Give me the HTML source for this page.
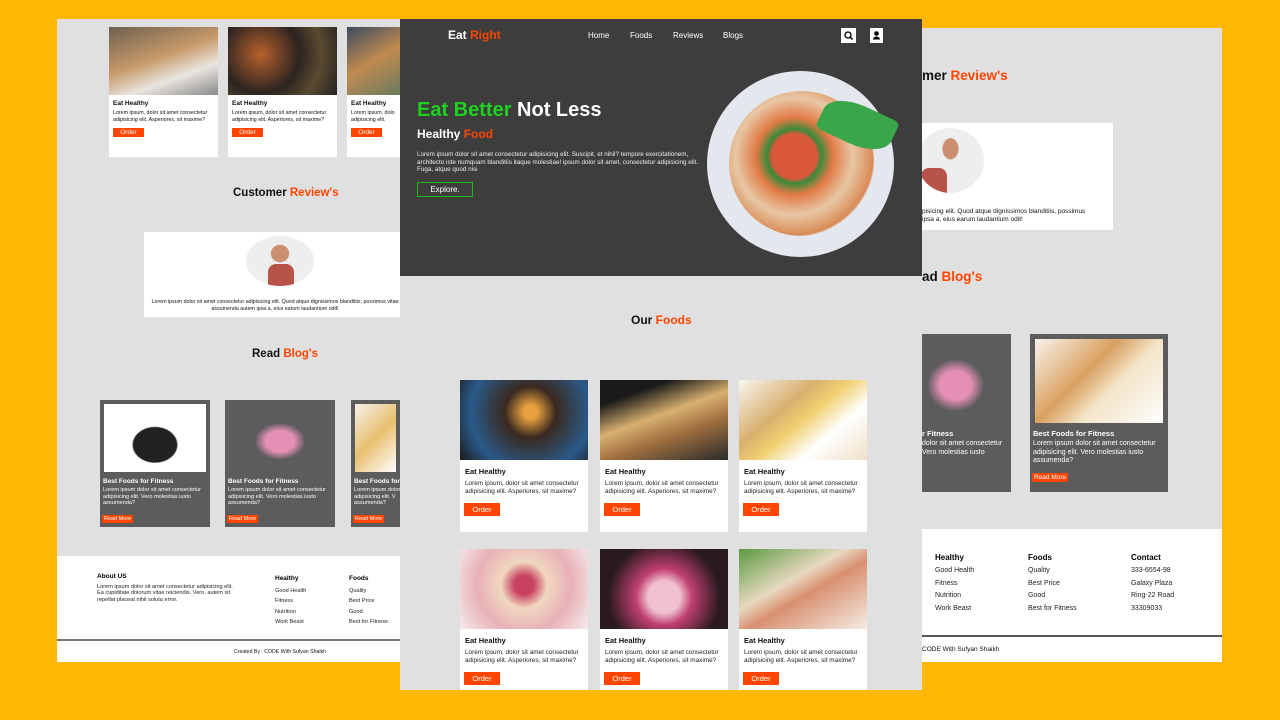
<!DOCTYPE html>
<html><head><meta charset="utf-8"><style>
*{margin:0;padding:0;box-sizing:border-box}
body{width:1280px;height:720px;background:#ffb703;position:relative;overflow:hidden;font-family:"Liberation Sans",Arial,sans-serif;color:#111}
.a{position:absolute}
.o{color:#ff4500}
.card{position:absolute;background:#fff}
.card .img{height:68px}
.card h5{font-size:6.5px;margin:5px 4px 3px}
.card p{font-size:5.3px;margin:0 4px;line-height:6.5px}
.card b.btn{display:block;background:#ff4500;color:#fff;font-size:6.5px;font-weight:normal;width:31px;text-align:center;margin:5px 4px;padding:1px 0}
.fc{position:absolute;background:#fff;width:128px;height:152px}
.fc .img{height:80px}
.fc h5{font-size:7.5px;margin:7px 5px 4px}
.fc p{font-size:6.4px;line-height:8px;margin:0 5px;color:#222}
.fc .btn{display:block;background:#ff4500;color:#fff;font-size:7.5px;width:36px;text-align:center;margin:7px 4px;padding:2px 0}
.bc{position:absolute;background:#5c5c5c;color:#fff}
.bc h5{font-size:6.5px;margin:6px 3px 2px}
.bc p{font-size:5.6px;line-height:6.5px;margin:0 3px}
.bc .btn{display:inline-block;background:#ff4500;font-size:5.5px;padding:1px 2px;margin:3px 2px}
.h2{position:absolute;font-weight:bold;white-space:nowrap}
.ft{position:absolute;font-size:5.6px;line-height:10.5px;color:#222}
.ft b{font-size:7px;display:block;margin-bottom:1px;color:#000}
</style></head><body>

<!-- LEFT PANEL -->
<div class="a" style="left:57px;top:19px;width:343px;height:643px;background:#e0e0e0"></div>
<div class="card" style="left:109px;top:27px;width:109px;height:130px"><div class="img" style="background:linear-gradient(160deg,#6d6050,#c79a6a 45%,#e9e5df 70%,#8a8a8a)"></div><h5>Eat Healthy</h5><p>Lorem ipsum, dolor sit amet consectetur adipisicing elit. Asperiores, sit maxime?</p><b class="btn">Order</b></div>
<div class="card" style="left:228px;top:27px;width:109px;height:130px"><div class="img" style="background:radial-gradient(circle at 30% 40%,#b8612e,#2c2420 45%,#5a4a30 70%,#222)"></div><h5>Eat Healthy</h5><p>Lorem ipsum, dolor sit amet consectetur adipisicing elit. Asperiores, sit maxime?</p><b class="btn">Order</b></div>
<div class="card" style="left:347px;top:27px;width:53px;height:130px;overflow:hidden"><div class="img" style="background:linear-gradient(150deg,#3a4a60,#c08a50 50%,#6a7a60)"></div><h5>Eat Healthy</h5><p style="white-space:nowrap">Lorem ipsum, dolo<br>adipisicing elit.</p><b class="btn">Order</b></div>
<div class="h2" style="left:233px;top:187px;font-size:11.5px">Customer <span class="o">Review's</span></div>
<div class="a" style="left:144px;top:232px;width:256px;height:85px;background:#fff"></div>
<div class="a" style="left:246px;top:236px;width:68px;height:50px;border-radius:50%;background:radial-gradient(ellipse at 50% 35%,#c98f6e 0 18%,#eee 20%);overflow:hidden"><div class="a" style="left:22px;top:28px;width:26px;height:24px;background:#b8534a;border-radius:8px 8px 0 0"></div></div>
<div class="a" style="left:150px;top:299px;width:250px;font-size:5.3px;line-height:6.5px;text-align:center">Lorem ipsum dolor sit amet consectetur adipisicing elit. Quod atque dignissimos blanditiis, possimus vitae assumenda autem ipsa a, elus earum laudantium odit!</div>
<div class="h2" style="left:252px;top:348px;font-size:11.5px">Read <span class="o">Blog's</span></div>
<div class="bc" style="left:100px;top:400px;width:110px;height:127px"><div style="margin:4px;height:68px;background:radial-gradient(ellipse at 50% 60%,#222 0 30%,#fff 32%)"></div><h5>Best Foods for Fitness</h5><p>Lorem ipsum dolor sit amet consectetur adipisicing elit. Vero molestias iusto assumenda?</p><span class="btn">Read More</span></div>
<div class="bc" style="left:225px;top:400px;width:110px;height:127px"><div style="margin:4px;height:68px;background:radial-gradient(ellipse at 50% 55%,#e58fb5 0 20%,#5c5c5c 35%)"></div><h5>Best Foods for Fitness</h5><p>Lorem ipsum dolor sit amet consectetur adipisicing elit. Vero molestias iusto assumenda?</p><span class="btn">Read More</span></div>
<div class="bc" style="left:351px;top:400px;width:49px;height:127px;overflow:hidden"><div style="margin:4px;height:68px;background:linear-gradient(135deg,#f5f0ea,#e8c070 50%,#fff)"></div><h5 style="white-space:nowrap">Best Foods for F</h5><p style="white-space:nowrap">Lorem ipsum dolor<br>adipisicing elit. V<br>assumenda?</p><span class="btn">Read More</span></div>
<div class="a" style="left:57px;top:556px;width:343px;height:106px;background:#fff"></div>
<div class="a" style="left:57px;top:639px;width:343px;height:2px;background:#777"></div>
<div class="ft" style="left:97px;top:574px;width:140px;line-height:6.5px"><b style="margin-bottom:3px;font-size:6.5px">About US</b>Lorem ipsum dolor sit amet consectetur adipisicing elit. Ea cupiditate dolorum vitae reiciendis. Vero, autem sit repellat placeat nihil soluta error.</div>
<div class="ft" style="left:275px;top:574px"><b style="font-size:6.5px">Healthy</b>Good Health<br>Fitness<br>Nutrition<br>Work Beast</div>
<div class="ft" style="left:349px;top:574px"><b style="font-size:6.5px">Foods</b>Quality<br>Best Price<br>Good<br>Best for Fitness</div>
<div class="a" style="left:234px;top:649px;font-size:5.2px">Created By : CODE With Sufyan Shaikh</div>

<!-- RIGHT PANEL -->
<div class="a" style="left:922px;top:28px;width:300px;height:634px;background:#e0e0e0"></div>
<div class="h2" style="left:922px;top:68px;font-size:13.5px">mer <span class="o">Review's</span></div>
<div class="a" style="left:922px;top:123px;width:191px;height:107px;background:#fff"></div>
<div class="a" style="left:917px;top:128px;width:67px;height:65px;border-radius:50%;background:radial-gradient(ellipse at 50% 32%,#c98f6e 0 16%,#eee 18%);overflow:hidden"><div class="a" style="left:4px;top:40px;width:26px;height:26px;background:#b8534a;border-radius:8px 8px 0 0"></div></div>
<div class="a" style="left:922px;top:208px;width:190px;font-size:6.5px;line-height:8px">pisicing elit. Quod atque dignissimos blanditiis, possimus<br>ipsa a, eius earum laudantium odit!</div>
<div class="h2" style="left:922px;top:269px;font-size:13.5px">ad <span class="o">Blog's</span></div>
<div class="bc" style="left:922px;top:334px;width:89px;height:158px"><div style="margin:5px 5px 5px 0;height:84px;background:radial-gradient(ellipse at 40% 55%,#e58fb5 0 22%,#5c5c5c 40%)"></div><h5 style="font-size:7.5px;margin-left:0">r Fitness</h5><p style="font-size:7px;line-height:8.5px;margin-left:0">dolor sit amet consectetur Vero molestias iusto</p></div>
<div class="bc" style="left:1030px;top:334px;width:138px;height:158px"><div style="margin:5px;height:84px;background:linear-gradient(135deg,#f8f4ee,#d9a060 40%,#f2e4c8 60%,#fff)"></div><h5 style="font-size:7.5px">Best Foods for Fitness</h5><p style="font-size:7px;line-height:8.5px">Lorem ipsum dolor sit amet consectetur adipisicing elit. Vero molestias iusto assumenda?</p><span class="btn" style="font-size:6.5px">Read More</span></div>
<div class="a" style="left:922px;top:529px;width:300px;height:133px;background:#fff"></div>
<div class="a" style="left:922px;top:635px;width:300px;height:2px;background:#555"></div>
<div class="ft" style="left:935px;top:552px;font-size:7px;line-height:12.8px"><b style="font-size:8px;margin:0">Healthy</b>Good Health<br>Fitness<br>Nutrition<br>Work Beast</div>
<div class="ft" style="left:1028px;top:552px;font-size:7px;line-height:12.8px"><b style="font-size:8px;margin:0">Foods</b>Quality<br>Best Price<br>Good<br>Best for Fitness</div>
<div class="ft" style="left:1131px;top:552px;font-size:7px;line-height:12.8px"><b style="font-size:8px;margin:0">Contact</b>333-6554-98<br>Galaxy Plaza<br>Ring-22 Road<br>33309033</div>
<div class="a" style="left:922px;top:646px;font-size:6.5px">CODE With Sufyan Shaikh</div>

<!-- CENTER -->
<div class="a" style="left:400px;top:19px;width:522px;height:671px;background:#e0e0e0"></div>
<div class="a" style="left:400px;top:19px;width:522px;height:257px;background:#3d3d3d"></div>
<div class="a" style="left:448px;top:28px;font-size:12px;font-weight:bold;color:#fff">Eat <span class="o">Right</span></div>
<div class="a" style="left:588px;top:31px;font-size:8px;color:#fff">Home</div>
<div class="a" style="left:630px;top:31px;font-size:8px;color:#fff">Foods</div>
<div class="a" style="left:673px;top:31px;font-size:8px;color:#fff">Reviews</div>
<div class="a" style="left:723px;top:31px;font-size:8px;color:#fff">Blogs</div>
<div class="a" style="left:841px;top:28px;width:15px;height:15px;background:#fff"><svg width="15" height="15"><circle cx="7" cy="7" r="3" fill="none" stroke="#000" stroke-width="1.3"/><line x1="9.2" y1="9.2" x2="11.5" y2="11.5" stroke="#000" stroke-width="1.5"/></svg></div>
<div class="a" style="left:870px;top:28px;width:13px;height:15px;background:#fff"><svg width="13" height="15"><circle cx="6.5" cy="5.5" r="2.3"/><path d="M3 11.5a3.5 3 0 0 1 7 0z"/></svg></div>
<div class="a" style="left:417px;top:99px;font-size:20px;font-weight:bold;color:#fff;white-space:nowrap"><span style="color:#1fd11f">Eat Better</span> Not Less</div>
<div class="a" style="left:417px;top:127px;font-size:12px;font-weight:bold;color:#fff">Healthy <span class="o">Food</span></div>
<div class="a" style="left:417px;top:151px;width:282px;font-size:6.3px;line-height:7.5px;color:#eee">Lorem ipsum dolor sit amet consectetur adipisicing elit. Suscipit, et nihil? tempore exercitationem, architecto iste numquam blanditiis itaque molestiae! ipsum dolor sit amet, consectetur adipisicing elit. Fuga, atque quod nisi</div>
<div class="a" style="left:417px;top:182px;width:56px;height:15px;border:1px solid #1fb81f;color:#fff;font-size:8px;text-align:center;line-height:13px">Explore.</div>
<div class="a" style="left:707px;top:71px;width:187px;height:186px;border-radius:50%;background:#e4e8ee"></div>
<div class="a" style="left:729px;top:91px;width:145px;height:145px;border-radius:50%;background:radial-gradient(circle at 45% 45%,#d9583a 0 20%,#3a8a3a 24%,#e07a45 34%,#e8c7a5 52%,#d98a55 70%,#e4e8ee 72%)"></div>
<div class="a" style="left:820px;top:105px;width:75px;height:40px;background:#3aa64a;border-radius:50% 10% 50% 10%;transform:rotate(25deg)"></div>

<div class="h2" style="left:631px;top:313px;font-size:12px">Our <span class="o">Foods</span></div>
<div class="fc" style="left:460px;top:380px"><div class="img" style="background:radial-gradient(circle at 55% 40%,#e8a040 0 8%,#3a2a20 30%,#2a5a8a 70%,#1a1a1a)"></div><h5>Eat Healthy</h5><p>Lorem ipsum, dolor sit amet consectetur adipisicing elit. Asperiores, sit maxime?</p><b class="btn" style="font-weight:normal">Order</b></div>
<div class="fc" style="left:600px;top:380px"><div class="img" style="background:linear-gradient(160deg,#1a1a1a 20%,#d8b070 45%,#a07040 65%,#2a2a2a)"></div><h5>Eat Healthy</h5><p>Lorem ipsum, dolor sit amet consectetur adipisicing elit. Asperiores, sit maxime?</p><b class="btn" style="font-weight:normal">Order</b></div>
<div class="fc" style="left:739px;top:380px"><div class="img" style="background:linear-gradient(140deg,#f8f5f0,#d8b070 35%,#f0d070 50%,#fff 70%,#f0e0c8)"></div><h5>Eat Healthy</h5><p>Lorem ipsum, dolor sit amet consectetur adipisicing elit. Asperiores, sit maxime?</p><b class="btn" style="font-weight:normal">Order</b></div>
<div class="fc" style="left:460px;top:549px;height:141px"><div class="img" style="background:radial-gradient(circle at 50% 45%,#c84060 0 12%,#f0d8c0 30%,#e8b0b8 60%,#f4ecec)"></div><h5>Eat Healthy</h5><p>Lorem ipsum, dolor sit amet consectetur adipisicing elit. Asperiores, sit maxime?</p><b class="btn" style="font-weight:normal">Order</b></div>
<div class="fc" style="left:600px;top:549px;height:141px"><div class="img" style="background:radial-gradient(circle at 50% 60%,#f0c0d0 0 20%,#c04070 35%,#2a1a20 70%)"></div><h5>Eat Healthy</h5><p>Lorem ipsum, dolor sit amet consectetur adipisicing elit. Asperiores, sit maxime?</p><b class="btn" style="font-weight:normal">Order</b></div>
<div class="fc" style="left:739px;top:549px;height:141px"><div class="img" style="background:linear-gradient(150deg,#5a9a40,#e8d8c0 40%,#d89070 55%,#f4ece4)"></div><h5>Eat Healthy</h5><p>Lorem ipsum, dolor sit amet consectetur adipisicing elit. Asperiores, sit maxime?</p><b class="btn" style="font-weight:normal">Order</b></div>
</body></html>
